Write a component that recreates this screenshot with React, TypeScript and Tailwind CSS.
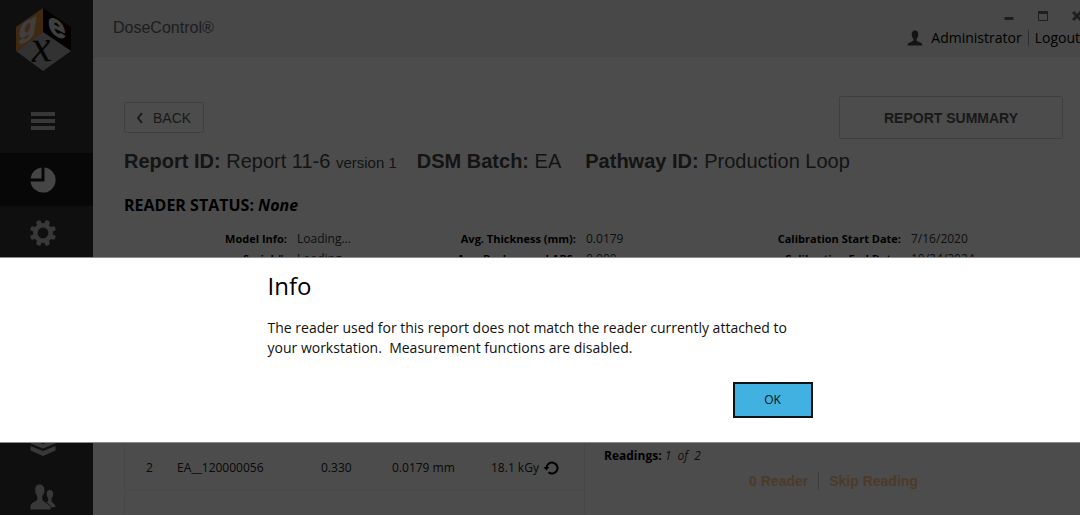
import { useState } from "react";

const details = [
  [
    { label: "Model Info:", value: "Loading..." },
    { label: "Serial #:", value: "Loading..." },
  ],
  [
    { label: "Avg. Thickness (mm):", value: "0.0179" },
    { label: "Avg. Background ABS:", value: "0.000" },
  ],
  [
    { label: "Calibration Start Date:", value: "7/16/2020" },
    { label: "Calibration End Date:", value: "10/24/2024" },
  ],
];

const Logo = () => (
  <svg viewBox="0 0 56 64" className="w-14 h-16 overflow-visible" role="img" aria-label="GEX">
    <polygon points="28,0 28,24 1,43 1,19" fill="#d98736" />
    <polygon points="28,0 56,19 56,43 28,24" fill="#0a0805" />
    <polygon points="28,24 56,43 28,63 1,43" fill="#a8a8a8" />
    <g fontFamily="Liberation Sans" fontWeight="bold" fill="#d4d4d4" stroke="#d4d4d4">
      <text transform="matrix(1 -0.5 -0.15 1 3 32)" fontSize="29">g</text>
      <text transform="matrix(1 0.5 0.1 1 34 24)" fontSize="31">e</text>
    </g>
    <text
      transform="matrix(1 -0.05 0.1 1 17 54)"
      fontFamily="Liberation Serif"
      fontStyle="italic"
      fontSize="46"
      fill="#111"
    >
      x
    </text>
  </svg>
);

const MenuIcon = () => (
  <svg viewBox="0 0 26 26" className="w-[26px] h-[26px]" fill="currentColor">
    <path d="M1 4h24v4H1zM1 11h24v4H1zM1 18h24v4H1z" />
  </svg>
);

const PieIcon = () => (
  <svg viewBox="0 0 26 26" className="w-[26px] h-[26px]" fill="currentColor">
    <path d="M14.5 .5A12.6 12.6 0 1 1 .5 14.5H14.5z" />
    <path d="M11.5 .5V11.5H.5A12.6 12.6 0 0 1 11.5 .5z" />
  </svg>
);

const GearIcon = () => (
  <svg viewBox="0 0 26 26" className="w-[26px] h-[26px]">
    <g fill="currentColor">
      <circle cx="13" cy="13" r="10" />
      {[22.5, 67.5, 112.5, 157.5, 202.5, 247.5, 292.5, 337.5].map((a) => (
        <rect key={a} x="10.6" y="-.2" width="4.8" height="6" rx="1.8" transform={`rotate(${a} 13 13)`} />
      ))}
    </g>
    <circle cx="13" cy="13" r="5.4" fill="#333" />
  </svg>
);

const LayersIcon = () => (
  <svg viewBox="0 0 26 26" className="w-[26px] h-[26px]" fill="currentColor">
    <path d="M13 0l12 5-12 5L1 5zM.5 8L13 13l12.500-5v4.500L13 17.500 .5 12.500zM.5 15L13 20l12.500-5v4.500L13 25 .5 19.500z" />
  </svg>
);

const UsersIcon = () => (
  <svg viewBox="0 0 26 26" className="w-[26px] h-[26px]" fill="currentColor">
    <path d="M9.500 .5C6.500.5 5 2.700 5.200 6c.1 3 .9 4.800 2.100 6v3.600C6.500 18 .5 18.500.5 22.500V25.500H21C21 20 13 18.500 12.300 15.500V12c1.200-1.200 2-3 2.100-6C14.500 2.700 12.500.5 9.500.5z" />
    <path d="M20 6c-2.200 0-3.500 1.600-3.300 4 .1 2 .7 3.300 1.500 4.200v2.500c-.3.700-1 1.200-1.800 1.600 2 1.300 3.600 2.600 4.500 4.900h4.600c0-3.600-3.600-4.400-4-6.500v-2.500c.9-.9 1.500-2.200 1.600-4.200.1-2.400-1-4-3.100-4z" />
  </svg>
);

const PersonIcon = () => (
  <svg viewBox="0 0 16 16" className="w-4 h-4" fill="currentColor">
    <path d="M8 .5C5.800.5 4.600 2 4.700 4.300c.1 2.400.8 3.700 1.700 4.600v1.600C5.500 12.200.5 12 .5 15.500h15c0-3.500-5-3.300-5.900-5V8.900c.9-.9 1.600-2.200 1.700-4.600C11.400 2 10.200.5 8 .5z" />
  </svg>
);

const RedoIcon = () => (
  <svg viewBox="0 0 16 16" className="w-4 h-4" fill="none" stroke="currentColor" strokeWidth="2">
    <path d="M3.500 8A5.500 5.500 0 1 1 5.500 12.300" />
    <path d="M.5 7h5.800L3.400 10.400z" fill="currentColor" stroke="none" />
  </svg>
);

const navButton = "flex items-center justify-center w-full h-[53px]";

const Sidebar = () => (
  <nav className="w-[93px] shrink-0 bg-[#333] text-[#bbb]">
    <div className="flex justify-center pt-2 pr-2">
      <Logo />
    </div>
    <button className={`${navButton} mt-[22px]`} aria-label="Menu">
      <span className="pr-2"><MenuIcon /></span>
    </button>
    <button className={`${navButton} mt-[6px] bg-[#181818] text-[#e6e6e6]`} aria-label="Reports">
      <span className="pr-2"><PieIcon /></span>
    </button>
    <button className={navButton} aria-label="Settings">
      <span className="pr-2"><GearIcon /></span>
    </button>
    <button className={`${navButton} mt-[158px]`} aria-label="Batches">
      <span className="pr-2"><LayersIcon /></span>
    </button>
    <button className={navButton} aria-label="Users">
      <span className="pr-2"><UsersIcon /></span>
    </button>
  </nav>
);

const Header = () => (
  <header className="flex justify-between h-[57px] pl-5 bg-[#f0f0f0] border-b border-[#ebebeb]">
    <h1 className="pt-4 font-['Liberation_Sans',sans-serif] text-base leading-6 text-[#666]">
      DoseControl®
    </h1>
    <div className="flex flex-col items-end">
      <div className="flex items-center gap-6 h-7 pt-1 -mr-[2px] text-[#666]">
        <button aria-label="Minimize">
          <svg viewBox="0 0 10 10" className="w-[10px] h-[10px]" fill="currentColor">
            <path d="M.5 6h9v3h-9z" />
          </svg>
        </button>
        <button aria-label="Maximize">
          <svg viewBox="0 0 10 10" className="w-[10px] h-[10px]" fill="none" stroke="currentColor">
            <path d="M.5 .5h9v9h-9z" />
            <path d="M0 1.500h10" strokeWidth="3" />
          </svg>
        </button>
        <button aria-label="Close">
          <svg viewBox="0 0 10 10" className="w-[10px] h-[10px]" fill="none" stroke="currentColor" strokeWidth="3">
            <path d="M1 1l8 8M9 1l-8 8" />
          </svg>
        </button>
      </div>
      <div className="flex items-center text-sm leading-5 text-black">
        <span className="mr-2 text-[#444]"><PersonIcon /></span>
        <span>Administrator</span>
        <span className="w-px h-4 mx-[6px] bg-[#999]" />
        <a href="#logout">Logout</a>
      </div>
    </div>
  </header>
);

const Report = () => (
  <main className="pl-[31px] pr-[17px] pt-[39px]">
    <div className="flex items-center justify-between font-['Liberation_Sans',sans-serif] text-sm text-[#555]">
      <button className="flex items-center h-[31px] px-3 border border-[#d4d4d4] rounded-xs">
        <svg viewBox="0 0 6 12" className="w-[6px] h-3 mr-[10px]" fill="none" stroke="currentColor" strokeWidth="2">
          <path d="M5 1L1 6l4 5" />
        </svg>
        BACK
      </button>
      <button className="w-56 h-[43px] border border-[#d4d4d4] rounded-xs font-bold">REPORT SUMMARY</button>
    </div>

    <h2 className="flex items-baseline gap-5 mt-2 font-['Liberation_Sans',sans-serif] text-xl leading-7 text-[#444]">
      <span>
        <b>Report ID:</b> Report 11-6 <span className="text-[15px]">version 1</span>
      </span>
      <span><b>DSM Batch:</b> EA</span>
      <span className="pl-1"><b>Pathway ID:</b> Production Loop</span>
    </h2>

    <p className="mt-4 text-base leading-6 font-bold text-black">
      READER STATUS: <i>None</i>
    </p>

    <div className="grid grid-cols-[289fr_325fr_325fr] mt-3 text-xs leading-5 text-[#333]">
      {details.map((column) => (
        <dl key={column[0].label} className="grid grid-cols-[163px_1fr] gap-x-[10px]">
          {column.map((d) => (
            <div key={d.label} className="contents">
              <dt className="text-right text-[11px] leading-5 font-bold text-black whitespace-nowrap">{d.label}</dt>
              <dd>{d.value}</dd>
            </div>
          ))}
        </dl>
      ))}
    </div>

    <div className="flex mt-[173px]">
      <div className="w-[461px] h-28 shrink-0 border-x border-[#ededed]">
        <table className="w-full table-fixed text-xs text-[#222]">
          <tbody>
            <tr className="h-12 border-b border-[#f2f2f2]">
              <td className="w-[52px] pl-[21px] pt-1">2</td>
              <td className="w-36 pt-1">EA__120000056</td>
              <td className="w-[71px] pt-1">0.330</td>
              <td className="w-[99px] pt-1">0.0179 mm</td>
              <td className="pt-1">
                <span className="flex items-center gap-1">
                  18.1 kGy
                  <button className="text-black" aria-label="Repeat reading"><RedoIcon /></button>
                </span>
              </td>
            </tr>
          </tbody>
        </table>
      </div>
      <div className="flex-1 pl-[19px] pt-1">
        <p className="text-xs leading-5 text-[#333]">
          <b className="text-black">Readings:</b> <i>1&nbsp; of&nbsp; 2</i>
        </p>
        <div className="flex items-center justify-center mt-[5px] font-['Liberation_Sans',sans-serif] text-sm font-bold text-[#ffc48a]">
          <button disabled>0 Reader</button>
          <span className="w-px h-[18px] mx-[10px] bg-[#ccc]" />
          <button disabled>Skip Reading</button>
        </div>
      </div>
    </div>
  </main>
);

const InfoDialog = ({ onClose }: { onClose: () => void }) => (
  <div className="fixed inset-0 z-50 pt-[257px] bg-black/70">
    <div role="dialog" aria-labelledby="info-title" className="pt-[10px] pb-6 bg-white border-y border-[#8c8c8c]">
      <div className="max-w-[545px] mx-auto text-[#111]">
        <h2 id="info-title" className="text-2xl leading-9 text-black">Info</h2>
        <p className="max-w-[532px] mt-[14px] text-sm leading-5">
          The reader used for this report does not match the reader currently attached to
          your workstation.&nbsp; Measurement functions are disabled.
        </p>
        <div className="flex justify-end mt-6">
          <button onClick={onClose} className="w-20 h-9 border-2 border-[#111] bg-[#41b1e1] text-xs">
            OK
          </button>
        </div>
      </div>
    </div>
  </div>
);

export default function App() {
  const [showInfo, setShowInfo] = useState(true);

  return (
    <div className="flex h-screen overflow-hidden bg-white font-['Open_Sans','Noto_Sans',sans-serif]">
      <Sidebar />
      <div className="flex-1 min-w-0">
        <Header />
        <Report />
      </div>
      {showInfo && <InfoDialog onClose={() => setShowInfo(false)} />}
    </div>
  );
}
